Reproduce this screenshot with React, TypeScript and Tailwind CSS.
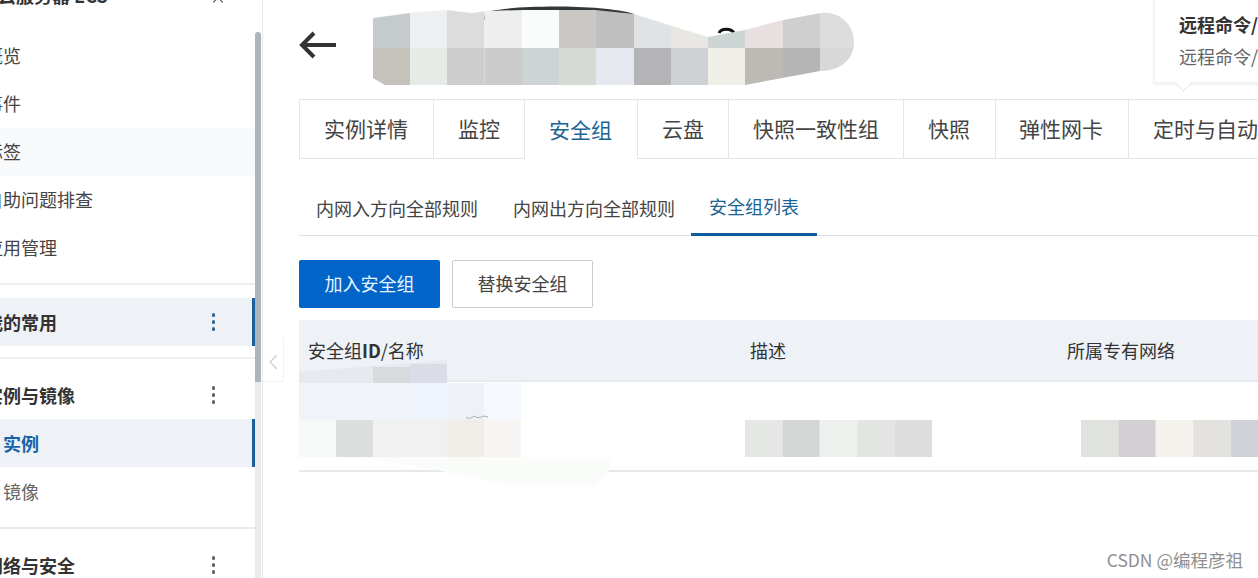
const font = "font-['Noto_Sans_CJK_SC','Noto_Sans',sans-serif]";

const detailTabs = [
  { label: "实例详情", space: "pl-[24px] pr-[25px] border-l" },
  { label: "监控", space: "pl-[24px] pr-[24px]" },
  { label: "安全组", space: "pl-[24px] pr-[25px]" },
  { label: "云盘", space: "pl-[24px] pr-[24px]" },
  { label: "快照一致性组", space: "pl-[24px] pr-[24px]" },
  { label: "快照", space: "pl-[24px] pr-[25px]" },
  { label: "弹性网卡", space: "pl-[23px] pr-[25px]" },
  { label: "定时与自动任务", space: "pl-[24px] pr-[24px]" },
];

const subTabs = [
  { label: "内网入方向全部规则", space: "pl-[17px] pr-[17px]" },
  { label: "内网出方向全部规则", space: "pl-[18px] pr-[16px]" },
  { label: "安全组列表", space: "pl-[18px] pr-[18px]" },
];

// redacted title, two rows of blurred blocks
const titleEdges = [1, 38, 75, 112.5, 150, 187, 224, 262, 299, 336, 373, 411, 448, 482];
const titleTop = ["#c5cacd", "#eeeff0", "#dcdcdc", "#eeeeee", "#f8fdfc", "#cac8c5", "#c0bfbf", "#dfe3e6", "#e9e7e4", "#ced5d5", "#e8dfe0", "#cfcfcf", "#dddddd"];
const titleBottom = ["#c5c1bb", "#e6ebe7", "#cdcdcd", "#cccccc", "#ced3d6", "#d6dad4", "#e6e8ef", "#b4b3b6", "#ced2d5", "#efefe7", "#bdb9b4", "#b6b5b6", "#d8d8d8"];

function Kebab({ active = false }: { active?: boolean }) {
  const dot = active ? "bg-[#2f6491]" : "bg-[#5c5f63]";
  return (
    <span className={`flex flex-col gap-[3.5px] ${active ? "mr-[37px]" : "mr-[40px]"}`}>
      <span className={`w-[3.5px] h-[3.5px] rounded-full ${dot}`} />
      <span className={`w-[3.5px] h-[3.5px] rounded-full ${dot}`} />
      <span className={`w-[3.5px] h-[3.5px] rounded-full ${dot}`} />
    </span>
  );
}

function NavItem({ label, hover = false }: { label: string; hover?: boolean }) {
  return (
    <div className={`h-[48px] pb-[1px] flex items-center text-[18px] text-[#444] ${hover ? "bg-[#f8f9fa]" : ""}`}>
      <span className="-ml-[15px] whitespace-nowrap">{label}</span>
    </div>
  );
}

function GroupHead({ label, active = false }: { label: string; active?: boolean }) {
  return (
    <div
      className={`h-[48px] flex items-center justify-between text-[18px] font-bold text-[#333] ${
        active ? "bg-[#eef1f6] border-r-[3px] border-[#1b5f9e]" : ""
      }`}
    >
      <span className="-ml-[15px] whitespace-nowrap">{label}</span>
      <Kebab active={active} />
    </div>
  );
}

function Sidebar() {
  return (
    <aside className="w-[263px] h-[578px] shrink-0 flex border-r border-[#e6e9ec] overflow-hidden">
      <div className="w-[255px] shrink-0">
        <div className="h-[32px] -mt-[21px] mb-[21px] flex items-center justify-between text-[18px] font-bold text-[#333]">
          <span className="-ml-[2px] whitespace-nowrap">云服务器 ECS</span>
          <svg width="12" height="8" viewBox="0 0 14 10" className="mr-[31px] mt-[9px]" fill="none" stroke="#555" strokeWidth="1.5">
            <path d="M1 8 7 2l6 6" />
          </svg>
        </div>
        <NavItem label="概览" />
        <NavItem label="事件" />
        <NavItem label="标签" hover />
        <NavItem label="自助问题排查" />
        <NavItem label="应用管理" />
        <div className="mt-[11px] h-[2px] bg-[#eceef0]" />
        <div className="mt-[13px]">
          <GroupHead label="我的常用" active />
        </div>
        <div className="mt-[11px] h-[2px] bg-[#f0f1f3]" />
        <div className="mt-[12px]">
          <GroupHead label="实例与镜像" />
        </div>
        <div className="h-[48px] flex items-center bg-[#eef1f6] border-r-[3px] border-[#1b5f9e] text-[18px] font-bold text-[#1763a8]">
          <span className="ml-[3px]">实例</span>
        </div>
        <div className="h-[48px] flex items-center text-[18px] text-[#666]">
          <span className="ml-[3px]">镜像</span>
        </div>
        <div className="mt-[12px] h-[2px] bg-[#e9ebee]" />
        <div className="mt-[12px]">
          <GroupHead label="网络与安全" />
        </div>
      </div>
      <div className="w-[6px] shrink-0 flex flex-col">
        <div className="h-[32px] shrink-0" />
        <div className="h-[350px] shrink-0 bg-[#aeb4b8] rounded-t-[3px]" />
        <div className="flex-1 bg-[#e8eaec]" />
      </div>
    </aside>
  );
}

function TitleBlur() {
  return (
    <svg width="482" height="93" viewBox="0 0 482 93" className="ml-[35px] shrink-0">
      <path d="M114 12C140 5 230 4 262 14L252 20H110Z" fill="#33383a" />
      <path d="M347 33c2-5 12-5 15 0" fill="none" stroke="#111" strokeWidth="3" />
      <clipPath id="title-shape">
        <path d="M1 18 38 13 74 10 100 13 114 11 151 10 223 10 262 14 300 26 336 37 373 30 411 20 449 13C468 11 482 25 482 42 482 60 468 71 448 71L373 85H13L1 78Z" />
      </clipPath>
      <g clipPath="url(#title-shape)">
        {titleTop.map((c, i) => (
          <rect key={i} x={titleEdges[i]} y="0" width={titleEdges[i + 1] - titleEdges[i]} height="48" fill={c} />
        ))}
        {titleBottom.map((c, i) => (
          <rect key={i} x={titleEdges[i]} y="48" width={titleEdges[i + 1] - titleEdges[i]} height="45" fill={c} />
        ))}
      </g>
    </svg>
  );
}

function BlurRow({ colors, cell }: { colors: string[]; cell: number }) {
  return (
    <svg width={colors.length * cell} height="37" className="shrink-0">
      {colors.map((c, i) => (
        <rect key={i} x={i * cell} y="0" width={cell} height="37" fill={c} />
      ))}
    </svg>
  );
}

function SecurityTable() {
  return (
    <div className="relative mt-[12px] text-[18px] text-[#333]">
      <div className="grid grid-cols-[442px_317px_1fr] h-[62px] items-center bg-[#eef1f6] border-b-2 border-[#e6e9ee] pl-[9px]">
        <div>
          安全组<span className="font-semibold">ID</span>/名称
        </div>
        <div>描述</div>
        <div>所属专有网络</div>
      </div>
      <div className="grid grid-cols-[446px_336px_1fr] h-[90px] border-b-2 border-[#e6e8ea]">
        <div />
        <div className="pt-[38px]">
          <BlurRow colors={["#e5e7e5", "#d4d6d5", "#eef0ee", "#e3e5e3", "#dddddd"]} cell={37.4} />
        </div>
        <div className="pt-[38px]">
          <BlurRow colors={["#dfe2dd", "#d2d0d3", "#f3f2ec", "#e3e2df", "#d1d1da"]} cell={37.4} />
        </div>
      </div>
      {/* blurred id/name over the first column */}
      <svg width="320" height="130" viewBox="0 0 320 130" className="absolute left-0 top-[40px]">
        <path d="M38 97H314L309 113 294 127H214L148 112 81 100Z" fill="#fafcfa" />
        <path d="M0 12 148 0V23H0Z" fill="#e6e9ee" />
        <path d="M74 7h37v16H74z" fill="#d9dade" />
        <path d="M111 4h37v19h-37z" fill="#dcdce6" />
        <rect x="0" y="23" width="148" height="37" fill="#f0f3f8" />
        <rect x="111" y="23" width="37" height="37" fill="#edf4fb" />
        <rect x="148" y="23" width="37" height="37" fill="#eef1f6" />
        <rect x="185" y="23" width="37" height="37" fill="#f5f8fd" />
        <rect x="0" y="60" width="37" height="37" fill="#f6f9f7" />
        <rect x="37" y="60" width="37" height="37" fill="#dcdedd" />
        <rect x="74" y="60" width="74" height="37" fill="#f0f1f0" />
        <rect x="148" y="60" width="37" height="37" fill="#f1eeea" />
        <rect x="185" y="60" width="37" height="37" fill="#f6f5f4" />
        <path d="M167 57c3 3 6 0 9-1 2 3 6 1 9 0l4 1" fill="none" stroke="#8aa2a5" strokeWidth="0.8" />
      </svg>
    </div>
  );
}

export default function App() {
  return (
    <div className={`w-[1258px] h-[578px] flex overflow-hidden bg-white relative ${font}`}>
      <Sidebar />

      {/* collapse handle */}
      <div className="absolute left-[263px] top-[338px] w-[21px] h-[44px] pt-[4px] flex items-center justify-center bg-white border-r border-[#f0f1f3] border-b">
        <svg width="10" height="16" viewBox="0 0 10 16" fill="none" stroke="#c9cdd2" strokeWidth="1.3">
          <path d="M9 1 2 8l7 7" />
        </svg>
      </div>

      <main className="flex-1 min-w-0 pl-[36px] overflow-hidden relative">
        <div className="h-[99px] flex items-start">
          <svg width="38" height="28" viewBox="0 0 38 28" className="mt-[31px] shrink-0" fill="none" stroke="#333" strokeWidth="4">
            <path d="M37 14H4M15 2 3 14l12 12" />
          </svg>
          <TitleBlur />
        </div>

        {/* tooltip over the tab bar */}
        <div className="absolute left-[891px] -top-[10px] w-[140px] h-[93px] bg-white border border-[#eeeff1] shadow-[0_1px_4px_rgba(0,0,0,0.08)] pl-[24px] pt-[17px] text-[18px] whitespace-nowrap">
          <div className="font-bold text-[#333] leading-[32px]">远程命令/</div>
          <div className="text-[#666] leading-[32px]">远程命令/</div>
          <span className="absolute left-[22px] -bottom-[7px] w-[13px] h-[13px] rotate-45 bg-white border-r border-b border-[#e6e8ea]" />
        </div>

        <div className="flex h-[60px] text-[21px] text-[#444] whitespace-nowrap">
          {detailTabs.map((tab) => (
            <div
              key={tab.label}
              className={`${tab.space} flex items-center shrink-0 border-t border-r border-[#e4e6e9] ${
                tab.label === "安全组" ? "text-[#1a6496]" : "border-b"
              }`}
            >
              {tab.label}
            </div>
          ))}
        </div>

        <div className="flex h-[77px] border-b border-[#dcdfe3] text-[18px] text-[#444] whitespace-nowrap">
          {subTabs.map((tab, i) => (
            <div
              key={tab.label}
              className={`${tab.space} pt-[21px] -mb-px flex items-center ${
                i === 2 ? "text-[#1a6496] border-b-[3px] border-[#0f5c9e]" : ""
              }`}
            >
              {tab.label}
            </div>
          ))}
        </div>

        <div className="flex gap-[12px] mt-[24px] text-[18px]">
          <button className="w-[141px] h-[48px] pb-[2px] rounded-[2px] bg-[#0064c8] text-[#e6f4ff]">加入安全组</button>
          <button className="w-[141px] h-[48px] pb-[2px] rounded-[2px] bg-white border border-[#c9cccf] text-[#444]">替换安全组</button>
        </div>

        <SecurityTable />
      </main>

      <div className="absolute right-[15px] top-[548px] text-[17.5px] leading-[24px] text-[#8f8f8f] whitespace-nowrap">
        CSDN @编程彦祖
      </div>
    </div>
  );
}
